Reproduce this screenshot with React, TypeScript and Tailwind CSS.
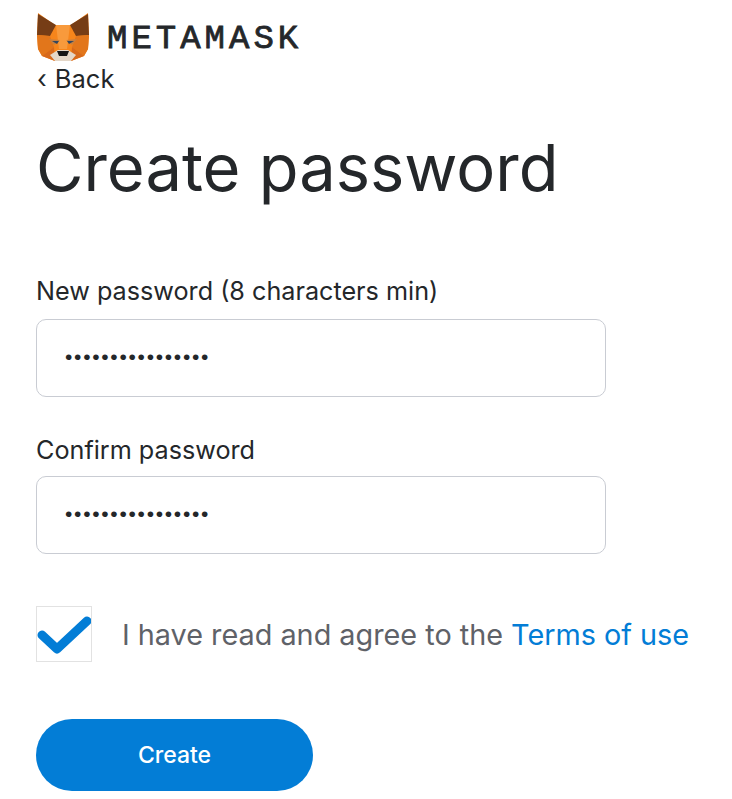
function Fox() {
  return (
    <svg width="52" height="48" viewBox="0 0 52 48" className="shrink-0">
      <polygon points="1,0 18,12 34,12 51,0 52,22 51,36 47,43 34,48 18,48 5,43 1,36 0,22" fill="#f6851b" />
      <polygon points="1,1 19,12 13,23 0,22" fill="#763d16" />
      <polygon points="51,1 33,12 39,23 52,22" fill="#763d16" />
      <polygon points="0,22 13,23 17,34 5,43 1,36" fill="#e2761b" />
      <polygon points="52,22 39,23 35,34 47,43 51,36" fill="#e2761b" />
      <polygon points="19,12 33,12 30,36 22,36" fill="#f89a3c" />
      <polygon points="12,26 23,27 17,32" fill="#c9803f" />
      <polygon points="40,26 29,27 35,32" fill="#c9803f" />
      <polygon points="15,28 22,28 20,31" fill="#33475f" />
      <polygon points="37,28 30,28 32,31" fill="#33475f" />
      <polygon points="5,43 17,34 18,48" fill="#d7691b" />
      <polygon points="47,43 35,34 34,48" fill="#d7691b" />
      <polygon points="13,42 21,37 31,37 39,42 34,48 18,48" fill="#e4d7c8" />
      <polygon points="20,38 32,38 30,43 22,43" fill="#161616" />
    </svg>
  );
}

function PasswordField({ label, className, gap }: { label: string; className: string; gap: string }) {
  return (
    <div className={className}>
      <div className="text-[25.2px] leading-[30px] text-[#24272a]">{label}</div>
      <div className={`${gap} flex h-[78px] w-[570px] items-center rounded-[10px] border border-[#c9ccd3] bg-white pb-[3px] pl-[28px]`}>
        <span className="font-['Liberation_Sans',sans-serif] text-[21px] leading-none tracking-[1.72px] text-[#24272a]">••••••••••••••••</span>
      </div>
    </div>
  );
}

export default function App() {
  return (
    <div className="h-[799px] w-[732px] overflow-hidden bg-white pl-[36px] font-['Inter',sans-serif]">
      <div className="flex h-[64px] items-end pb-[3px]">
        <div className="ml-[1px]"><Fox /></div>
        <span className="ml-[18px] mb-[4px] font-['Liberation_Mono',monospace] text-[34px] font-normal leading-[36px] tracking-[4px] text-[#24272a] [-webkit-text-stroke:0.8px_#24272a]">METAMASK</span>
      </div>
      <div className="flex h-[30px] items-center text-[25.5px] text-[#24272a]"><span className="mr-[8px] ml-[1px]">‹</span>Back</div>
      <h1 className="mt-[34px] text-[65px] font-normal leading-[80px] text-[#24272a]">Create password</h1>
      <PasswordField label="New password (8 characters min)" className="mt-[68px]" gap="mt-[13px]" />
      <PasswordField label="Confirm password" className="mt-[38px]" gap="mt-[11px]" />
      <div className="mt-[52px] flex items-center">
        <div className="h-[56px] w-[56px] border border-[#e2e2e2] bg-white">
          <svg width="54" height="54" viewBox="0 0 54 54" fill="none">
            <path d="M5 28 L20 42 L50 14" stroke="#037dd6" strokeWidth="9" strokeLinejoin="round" strokeLinecap="round" />
          </svg>
        </div>
        <div className="ml-[30px] pt-[1px] text-[28.8px] leading-[36px] text-[#5f6268]">
          I have read and agree to the <span className="text-[#037dd6]">Terms of use</span>
        </div>
      </div>
      <div className="mt-[57px] flex h-[72px] w-[277px] items-center justify-center rounded-[36px] bg-[#037dd6] text-[23px] font-medium text-white">Create</div>
    </div>
  );
}
